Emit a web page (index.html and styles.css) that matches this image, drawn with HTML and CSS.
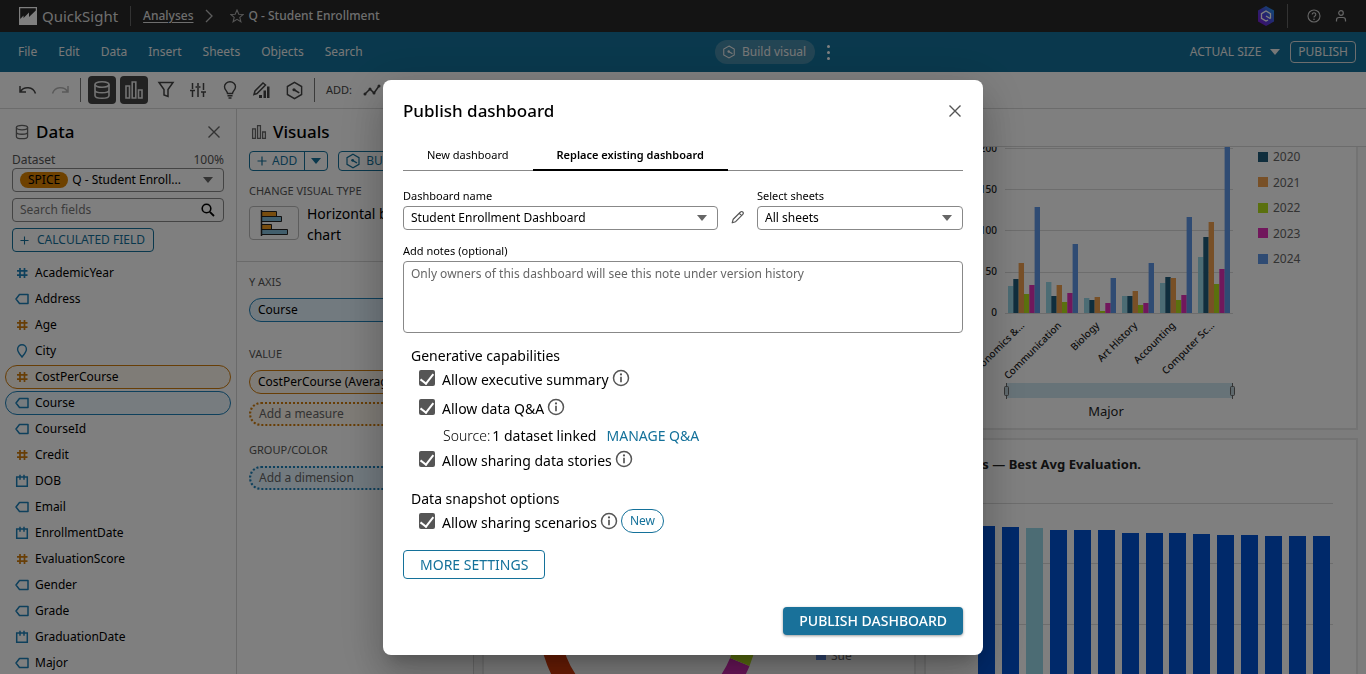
FILE: index.html
```html
<!DOCTYPE html>
<html lang="en">
<head>
<meta charset="utf-8">
<title>QuickSight - Q - Student Enrollment</title>
<link rel="stylesheet" href="styles.css">
</head>
<body>
<svg class="sprite" aria-hidden="true">
  <symbol id="i-num" viewBox="0 0 14 14"><path d="M5 2v10M9.500 2v10M2 4.800h10.500M2 9.200h10.500" fill="none" stroke="currentColor" stroke-width="1.700"/></symbol>
  <symbol id="i-tag" viewBox="0 0 14 14"><path d="M4.500 2.500H13v9H4.500L1 7z" fill="none" stroke="currentColor" stroke-width="1.500" stroke-linejoin="round"/></symbol>
  <symbol id="i-pin" viewBox="0 0 14 14"><path d="M7 13C4.500 9.800 2.600 7.800 2.600 5.200a4.400 4.400 0 0 1 8.800 0C11.400 7.800 9.500 9.800 7 13z" fill="none" stroke="currentColor" stroke-width="1.400"/></symbol>
  <symbol id="i-date" viewBox="0 0 14 14"><path d="M1.700 3h10.600v9.300H1.700zM5 0.800v5M9 0.800v5" fill="none" stroke="currentColor" stroke-width="1.500"/></symbol>
  <symbol id="i-db" viewBox="0 0 20 20"><g fill="none" stroke="currentColor" stroke-width="1.600"><ellipse cx="10" cy="4.500" rx="7" ry="2.800"/><path d="M3 4.500v11c0 1.600 3 2.800 7 2.800s7-1.200 7-2.800v-11M3 10c0 1.600 3 2.800 7 2.800s7-1.200 7-2.800"/></g></symbol>
  <symbol id="i-bars" viewBox="0 0 20 20"><path d="M2 6h3.500v12H2zM8.200 2h3.600v16H8.200zM14.500 10H18v8h-3.500z" fill="none" stroke="currentColor" stroke-width="1.600"/></symbol>
  <symbol id="i-hex" viewBox="0 0 20 20"><path d="M10 1.500l7.500 4.300v8.400L10 18.500l-7.500-4.300V5.800z" fill="none" stroke="currentColor" stroke-width="1.500"/><path d="M9.500 9.200l5.500 3.300" stroke="currentColor" stroke-width="1.800"/><circle cx="9.500" cy="9.200" r="1.700" fill="currentColor"/></symbol>
  <symbol id="i-x" viewBox="0 0 14 14"><path d="M1.500 1.500l11 11M12.500 1.500l-11 11" fill="none" stroke="currentColor" stroke-width="1.400"/></symbol>
  <symbol id="i-down" viewBox="0 0 10 6"><path d="M0 0h10L5 6z" fill="currentColor"/></symbol>
  <symbol id="i-info" viewBox="0 0 18 18"><circle cx="9" cy="9" r="7.500" fill="none" stroke="currentColor" stroke-width="1.500"/><circle cx="9" cy="5.400" r="1.100" fill="currentColor"/><path d="M9 7.800v5.400" stroke="currentColor" stroke-width="1.700"/></symbol>
  <symbol id="i-plus" viewBox="0 0 10 10"><path d="M5 0.500v9M0.500 5h9" stroke="currentColor" stroke-width="1.200"/></symbol>
</svg>

<header class="topbar">
  <a class="brand" href="#"><svg width="18" height="18" viewBox="0 0 18 18"><path d="M0 0h18v18H0z" fill="#fff"/><path d="M1.200 1.200h15.600v2.300L10 10V5.500L4.500 11V8.500L1.200 12z" fill="#282828"/></svg>QuickSight</a>
  <span class="rule"></span>
  <a class="crumb" href="#">Analyses</a>
  <svg width="8" height="14" viewBox="0 0 8 14"><path d="M1 1l6 6-6 6" fill="none" stroke="#bbb" stroke-width="1.300"/></svg>
  <span class="doc"><svg width="14" height="14" viewBox="0 0 14 14"><path d="M7 1l1.800 4.200 4.400.3-3.400 2.900 1.100 4.400L7 10.400l-3.900 2.400 1.100-4.400L.8 5.500l4.400-.3z" fill="none" stroke="#aaa" stroke-width="1.100"/></svg>Q - Student Enrollment</span>
  <div class="top-right">
    <svg width="18" height="20" viewBox="0 0 18 20"><defs><linearGradient id="qg" x1="1" y1="0" x2="0" y2="1"><stop offset="0" stop-color="#1ba7ee"/><stop offset=".5" stop-color="#4c46e0"/><stop offset="1" stop-color="#8a14d4"/></linearGradient></defs><path d="M9 0l8 4.500v11L9 20l-8-4.500v-11z" fill="url(#qg)"/><path d="M11 14L9 15l-4.500-2.600V7.600L9 5l4.500 2.600v4.800M9 10l4.500 2.800" fill="none" stroke="#fff" stroke-width="1.300"/></svg>
    <span class="rule"></span>
    <svg width="14" height="14" viewBox="0 0 14 14"><circle cx="7" cy="7" r="6" fill="none" stroke="#ccc" stroke-width="1.100"/><path d="M5.200 5.500a1.800 1.800 0 1 1 2.700 1.600c-.7.400-.9.700-.9 1.400" fill="none" stroke="#ccc" stroke-width="1.100"/><circle cx="7" cy="10.200" r=".8" fill="#ccc"/></svg>
    <svg width="12" height="14" viewBox="0 0 12 14"><circle cx="6" cy="4" r="2.300" fill="none" stroke="#ccc" stroke-width="1.200"/><path d="M1.500 12.500V11c0-1.800 1.200-2.500 2.500-2.500h4c1.300 0 2.500.7 2.500 2.500v1.500" fill="none" stroke="#ccc" stroke-width="1.200"/></svg>
  </div>
</header>

<nav class="menubar">
  <div class="menus"><a href="#">File</a><a href="#">Edit</a><a href="#">Data</a><a href="#">Insert</a><a href="#">Sheets</a><a href="#">Objects</a><a href="#">Search</a></div>
  <button class="build"><svg width="14" height="14"><use href="#i-hex"/></svg>Build visual</button>
  <button class="dots" aria-label="More"><i></i><i></i><i></i></button>
  <div class="menu-right">
    <button class="zoomsize">ACTUAL SIZE <svg width="10" height="6"><use href="#i-down"/></svg></button>
    <button class="publish">PUBLISH</button>
  </div>
</nav>

<div class="toolbar">
  <button aria-label="Undo"><svg width="20" height="16" viewBox="0 0 20 16"><path d="M2 4v6h6M2.500 9.500C6 4 15 4.500 17.500 11.500" fill="none" stroke="currentColor" stroke-width="1.500"/></svg></button>
  <button class="faded" aria-label="Redo"><svg width="20" height="16" viewBox="0 0 20 16"><path d="M18 4v6h-6M17.500 9.500C14 4 5 4.500 2.500 11.500" fill="none" stroke="currentColor" stroke-width="1.500"/></svg></button>
  <span class="rule"></span>
  <button class="on" aria-label="Data"><svg width="20" height="20"><use href="#i-db"/></svg></button>
  <button class="on" aria-label="Visuals"><svg width="20" height="20"><use href="#i-bars"/></svg></button>
  <button aria-label="Filter"><svg width="18" height="18" viewBox="0 0 18 18"><path d="M2 1.500h14L11 8.500v7l-4-1.500V8.500z" fill="none" stroke="currentColor" stroke-width="1.500"/></svg></button>
  <button aria-label="Parameters"><svg width="18" height="18" viewBox="0 0 18 18"><path d="M3.500 2v6M3.500 10v6M9 2v3M9 7v9M14.500 2v7M14.500 11.500V16M1 9.500h5M6.500 6h5M12 11h5" fill="none" stroke="currentColor" stroke-width="1.500"/></svg></button>
  <button aria-label="Insights"><svg width="14" height="18" viewBox="0 0 14 18"><path d="M4.500 12.500C4.500 10 1.500 9 1.500 5.700a5.500 5 0 0 1 11 0C12.500 9 9.500 10 9.500 12.500zM4.500 14.800h5M5.500 17h3" fill="none" stroke="currentColor" stroke-width="1.400"/></svg></button>
  <button aria-label="Edit chart"><svg width="20" height="18" viewBox="0 0 20 18"><path d="M2 13.500l1-3.500 8-8 2.500 2L5 12.500z" fill="none" stroke="currentColor" stroke-width="1.500"/><path d="M7 17v-3h3v3zM11.500 17V9.500h2.500V17zM15 17V5.500h2.500V17z" fill="currentColor"/></svg></button>
  <button aria-label="Q"><svg width="19" height="19"><use href="#i-hex"/></svg></button>
  <span class="rule"></span>
  <span class="addlabel">ADD:</span>
  <svg width="18" height="12" viewBox="0 0 18 12"><path d="M2 10l5-5 4 4 5-7" fill="none" stroke="currentColor" stroke-width="1.500"/><g fill="currentColor"><circle cx="2" cy="10" r="1.500"/><circle cx="7" cy="5" r="1.500"/><circle cx="11" cy="9" r="1.500"/><circle cx="16" cy="2" r="1.500"/></g></svg>
</div>

<div class="workspace">
  <aside class="data-pane">
    <div class="pane-head"><svg width="16" height="16"><use href="#i-db"/></svg><h2>Data</h2><button aria-label="Close data"><svg width="14" height="14"><use href="#i-x"/></svg></button></div>
    <div class="ds-label"><span>Dataset</span><span>100%</span></div>
    <button class="dataset"><span class="spice">SPICE</span><span class="dsname">Q - Student Enroll...</span><svg width="10" height="6"><use href="#i-down"/></svg></button>
    <div class="search"><input type="text" placeholder="Search fields" aria-label="Search fields"><svg width="14" height="14" viewBox="0 0 14 14"><circle cx="5.500" cy="5.500" r="4.300" fill="none" stroke="currentColor" stroke-width="1.600"/><path d="M8.800 8.800L13 13" stroke="currentColor" stroke-width="1.800"/></svg></div>
    <button class="calc"><svg width="9" height="9"><use href="#i-plus"/></svg>CALCULATED FIELD</button>
    <ul class="fields">
      <li><svg><use href="#i-num"/></svg>AcademicYear</li>
      <li><svg><use href="#i-tag"/></svg>Address</li>
      <li class="measure"><svg><use href="#i-num"/></svg>Age</li>
      <li><svg><use href="#i-pin"/></svg>City</li>
      <li class="measure used"><svg><use href="#i-num"/></svg>CostPerCourse</li>
      <li class="used"><svg><use href="#i-tag"/></svg>Course</li>
      <li><svg><use href="#i-tag"/></svg>CourseId</li>
      <li class="measure"><svg><use href="#i-num"/></svg>Credit</li>
      <li><svg><use href="#i-date"/></svg>DOB</li>
      <li><svg><use href="#i-tag"/></svg>Email</li>
      <li><svg><use href="#i-date"/></svg>EnrollmentDate</li>
      <li class="measure"><svg><use href="#i-num"/></svg>EvaluationScore</li>
      <li><svg><use href="#i-tag"/></svg>Gender</li>
      <li><svg><use href="#i-tag"/></svg>Grade</li>
      <li><svg><use href="#i-date"/></svg>GraduationDate</li>
      <li><svg><use href="#i-tag"/></svg>Major</li>
    </ul>
  </aside>

  <aside class="visuals-pane">
    <section class="vis-top">
      <div class="pane-head"><svg width="16" height="16"><use href="#i-bars"/></svg><h2>Visuals</h2></div>
      <div class="vis-actions">
        <div class="split"><button><svg width="10" height="10"><use href="#i-plus"/></svg>ADD</button><button aria-label="Add options"><svg width="10" height="6"><use href="#i-down"/></svg></button></div>
        <button class="build-btn"><svg width="16" height="16"><use href="#i-hex"/></svg>BUILD</button>
      </div>
      <h3>CHANGE VISUAL TYPE</h3>
      <div class="vis-type">
        <button aria-label="Visual type"><svg width="28" height="28" viewBox="0 0 28 28"><g stroke="#222" stroke-width="1"><path d="M1.500 2.500h15v5h-15zM1.500 15.500h10v5h-10z" fill="#f09a1e"/><path d="M1.500 7.500h20v5h-20zM1.500 20.500h26v5h-26z" fill="#83bdd8"/><path d="M1.500 1v26" stroke-width="1.500"/></g></svg></button>
        <span>Horizontal bar chart</span>
      </div>
    </section>
    <section class="wells">
      <h3>Y AXIS</h3>
      <div class="well">Course</div>
      <h3>VALUE</h3>
      <div class="well measure">CostPerCourse (Average)</div>
      <div class="well measure empty">Add a measure</div>
      <h3>GROUP/COLOR</h3>
      <div class="well empty">Add a dimension</div>
    </section>
  </aside>

  <main class="sheet">
    <div class="sheet-tabs"></div>
    <div class="board">
      <div class="card cut"></div>
      <div class="card cut">
        <svg viewBox="926 147 430 281" role="img" aria-label="Enrollment by major and year">
          <g stroke="#dadada"><path d="M1005 148.500h228M1005 189.500h228M1005 230.500h228M1005 272.500h228M1005 313.500h228"/></g>
          <g class="axis" text-anchor="end"><text x="997" y="152">200</text><text x="997" y="193">150</text><text x="997" y="234">100</text><text x="997" y="275">50</text><text x="997" y="316">0</text></g>
          <path fill="#98d8e8" d="M1008 286h5.400v27h-5.400zM1046 282h5.400v31h-5.400zM1084 298h5.400v15h-5.400zM1122 296h5.400v17h-5.400zM1160 283h5.400v30h-5.400zM1198 257h5.400v56h-5.400z"/>
          <path fill="#205c7a" d="M1013.300 279h5.400v34h-5.400zM1051.300 296h5.400v17h-5.400zM1089.300 300h5.400v13h-5.400zM1127.300 296h5.400v17h-5.400zM1165.300 277h5.400v36h-5.400zM1203.300 237h5.400v76h-5.400z"/>
          <path fill="#f0a04f" d="M1018.600 263h5.400v50h-5.400zM1056.600 285h5.400v28h-5.400zM1094.600 297h5.400v16h-5.400zM1132.600 291h5.400v22h-5.400zM1170.600 278h5.400v35h-5.400zM1208.600 222h5.400v91h-5.400z"/>
          <path fill="#b4e01c" d="M1024 294h5.400v19h-5.400zM1062 302h5.400v11h-5.400zM1100 311h5.400v2h-5.400zM1138 305h5.400v8h-5.400zM1176 300h5.400v13h-5.400zM1214 284h5.400v29h-5.400z"/>
          <path fill="#e22fb8" d="M1029.300 285h5.400v28h-5.400zM1067.300 293h5.400v20h-5.400zM1105.300 303h5.400v10h-5.400zM1143.300 303h5.400v10h-5.400zM1181.300 295h5.400v18h-5.400zM1219.300 269h5.400v44h-5.400z"/>
          <path fill="#5f96e6" d="M1034.600 207h5.400v106h-5.400zM1072.600 244h5.400v69h-5.400zM1110.600 278h5.400v35h-5.400zM1148.600 263h5.400v50h-5.400zM1186.600 217h5.400v96h-5.400zM1224.600 147h5.400v166h-5.400z"/>
          <g class="axis" text-anchor="end">
            <text transform="translate(1025 326) rotate(-45)">Economics &amp;...</text>
            <text transform="translate(1062 326) rotate(-45)">Communication</text>
            <text transform="translate(1100 326) rotate(-45)">Biology</text>
            <text transform="translate(1138 326) rotate(-45)">Art History</text>
            <text transform="translate(1176 326) rotate(-45)">Accounting</text>
            <text transform="translate(1215 326) rotate(-45)">Computer Sc...</text>
          </g>
          <path d="M1007 383h226v15h-226z" fill="#cfe6f0"/>
          <g fill="#bcd0d8" stroke="#666"><path d="M1006.500 383v16M1232.500 383v16"/><rect x="1004.500" y="386.500" width="4" height="9" rx="1"/><rect x="1230.500" y="386.500" width="4" height="9" rx="1"/></g>
          <text class="axis-title" x="1106" y="416" text-anchor="middle">Major</text>
          <g class="legend"><path d="M1258 152h10v10h-10z" fill="#205c7a"/><path d="M1258 177h10v10h-10z" fill="#f0a04f"/><path d="M1258 203h10v10h-10z" fill="#b4e01c"/><path d="M1258 228h10v10h-10z" fill="#e22fb8"/><path d="M1258 254h10v10h-10z" fill="#5f96e6"/>
          <text x="1273" y="161">2020</text><text x="1273" y="187">2021</text><text x="1273" y="212">2022</text><text x="1273" y="238">2023</text><text x="1273" y="263">2024</text></g>
        </svg>
      </div>
      <div class="card">
        <svg viewBox="484 440 430 234" role="img" aria-label="Enrollment by adviser">
          <g fill="none" stroke-width="21"><path d="M648.500 723.500A98.500 98.500 0 0 1 550 625" stroke="#d83a08"/><path d="M739.800 662A98.500 98.500 0 0 1 648.500 723.500" stroke="#d42ab4"/><path d="M747 625A98.500 98.500 0 0 1 739.800 662" stroke="#b4dc1e"/></g>
          <path d="M816 650h10v10h-10z" fill="#5f8ae0"/>
          <g class="legend"><text x="831" y="660">Sue</text></g>
          <g class="axis"><text x="493" y="682">Eva</text></g>
        </svg>
      </div>
      <div class="card">
        <h3 class="card-title">Majors — Best Avg Evaluation.</h3>
        <svg viewBox="926 490 430 184" role="img" aria-label="Best average evaluation">
          <g stroke="#dadada"><path d="M960 503.500h373M960 563.500h373M960 624.500h373"/></g>
          <path fill="#0052d4" d="M978 526h17v150h-17zM1002 527h17v150h-17zM1050 530h17v150h-17zM1074 530h17v150h-17zM1098 530h17v150h-17zM1122 533h17v150h-17zM1146 533h17v150h-17zM1169 533h17v150h-17zM1193 534h17v150h-17zM1217 535h17v150h-17zM1241 535h17v150h-17zM1265 536h17v150h-17zM1289 536h17v150h-17zM1313 536h17v150h-17z"/>
          <path fill="#98d8e8" d="M1026 528h17v150h-17z"/>
        </svg>
      </div>
    </div>
  </main>
</div>

<div class="overlay">
  <div class="dialog" role="dialog" aria-modal="true" aria-labelledby="dlg-title">
    <div class="dlg-head"><h1 id="dlg-title">Publish dashboard</h1><button aria-label="Close"><svg width="14" height="14"><use href="#i-x"/></svg></button></div>
    <div class="tabs" role="tablist"><button role="tab">New dashboard</button><button role="tab" aria-selected="true">Replace existing dashboard</button></div>
    <div class="form-row">
      <div class="field name"><label for="dname">Dashboard name</label><div class="select"><select id="dname"><option>Student Enrollment Dashboard</option></select><svg width="10" height="6"><use href="#i-down"/></svg></div></div>
      <button class="pencil" aria-label="Rename"><svg width="14" height="14" viewBox="0 0 14 14"><path d="M1.200 12.800l1-3.600L9.500 2c.6-.7 1.700-.7 2.300 0 .7.700.7 1.700 0 2.300l-7.200 7.400zM8.300 3.300l2.300 2.300" fill="none" stroke="currentColor" stroke-width="1.200" stroke-linejoin="round"/></svg></button>
      <div class="field sheets"><label for="sheets">Select sheets</label><div class="select"><select id="sheets"><option>All sheets</option></select><svg width="10" height="6"><use href="#i-down"/></svg></div></div>
    </div>
    <div class="field notes"><label for="notes">Add notes (optional)</label><textarea id="notes" placeholder="Only owners of this dashboard will see this note under version history"></textarea></div>
    <div class="options">
      <h2>Generative capabilities</h2>
      <div class="opt"><input type="checkbox" id="c1" checked><label for="c1">Allow executive summary</label><svg class="info"><use href="#i-info"/></svg></div>
      <div class="opt spaced"><input type="checkbox" id="c2" checked><label for="c2">Allow data Q&amp;A</label><svg class="info"><use href="#i-info"/></svg></div>
      <div class="source"><span class="light">Source:</span><span>1 dataset linked</span><a href="#">MANAGE Q&amp;A</a></div>
      <div class="opt"><input type="checkbox" id="c3" checked><label for="c3">Allow sharing data stories</label><svg class="info"><use href="#i-info"/></svg></div>
      <h2 class="second">Data snapshot options</h2>
      <div class="opt"><input type="checkbox" id="c4" checked><label for="c4">Allow sharing scenarios</label><svg class="info"><use href="#i-info"/></svg><span class="new">New</span></div>
    </div>
    <button class="more">MORE SETTINGS</button>
    <div class="dlg-foot"><button class="primary">PUBLISH DASHBOARD</button></div>
  </div>
</div>
</body>
</html>
```
FILE: styles.css
```css
* { box-sizing: border-box; }
body { margin: 0; height: 100vh; overflow: hidden; display: flex; flex-direction: column; font: 400 12px/16px "Noto Sans", "Open Sans", sans-serif; color: #000; background: #fff; }
button, input, select, textarea { font: inherit; color: inherit; margin: 0; }
button { padding: 0; border: 0; background: none; display: flex; align-items: center; justify-content: center; }
a { color: inherit; text-decoration: none; }
h1, h2, h3, ul { margin: 0; padding: 0; font-weight: 400; }
svg { display: block; flex: none; }
.sprite { position: absolute; width: 0; height: 0; }

.topbar { flex: none; height: 32px; background: #282828; color: #ddd; display: flex; align-items: center; padding: 0 19px; font-weight: 500; }
.brand { display: flex; align-items: center; gap: 5px; font-size: 15px; font-weight: 400; }
.topbar .rule { width: 1px; height: 20px; background: #666; margin: 0 12px; }
.crumb { text-decoration: underline; text-underline-offset: 2px; margin-right: 12px; }
.doc { display: flex; align-items: center; gap: 4px; margin-left: 17px; }
.top-right { margin-left: auto; display: flex; align-items: center; gap: 8px; }
.top-right .rule { height: 24px; margin: 0 11px 0 4px; }
.top-right svg:last-child { margin: 0 0 0 6px; }

.menubar { flex: none; height: 40px; background: #14719a; color: #eee; display: flex; align-items: center; padding: 0 10px 0 18px; }
.menus { display: flex; gap: 21px; flex: 57 1 0; }
.build { height: 24px; padding: 0 9px 0 7px; gap: 6px; border-radius: 12px; background: #478ba8; }
.dots { flex-direction: column; gap: 3px; margin-left: 12px; }
.dots i { width: 3px; height: 3px; border-radius: 50%; background: #fff; }
.menu-right { flex: 43 1 0; display: flex; justify-content: flex-end; align-items: center; gap: 10px; }
.zoomsize { gap: 9px; }
.publish { height: 22px; padding: 0 7px; border: 1px solid #ddd; border-radius: 4px; }

.toolbar { flex: none; height: 37px; border-bottom: 1px solid #d8d8d8; display: flex; align-items: center; gap: 4px; padding-left: 14px; color: #444; }
.toolbar button { width: 28px; height: 28px; border-radius: 4px; }
.toolbar .faded { color: #b5b5b5; }
.toolbar .on { background: #444; color: #e6e6e6; }
.toolbar .rule { width: 1px; height: 24px; background: #777; margin: 0 3px 0 2px; }
.addlabel { font-size: 11px; margin: 0 7px 0 4px; }

.workspace { flex: 1; min-height: 0; display: flex; }
.pane-head { display: flex; align-items: center; gap: 6px; color: #666; height: 24px; }
.pane-head h2 { font-size: 17px; line-height: 24px; color: #000; font-weight: 500; }
.pane-head button { margin-left: auto; }
.data-pane { flex: none; width: 237px; border-right: 1px solid #d5d5d5; padding: 11px 12px 0; }
.data-pane .pane-head { padding: 0 3px 0 2px; }
.ds-label { display: flex; justify-content: space-between; color: #555; margin: 8px 0 0; }
.dataset, .search { width: 212px; height: 24px; border: 1px solid #888; border-radius: 4px; display: flex; align-items: center; padding: 0 10px 0 7px; }
.dataset { justify-content: flex-start; }
.dataset svg { margin-left: auto; color: #666; }
.spice { background: #dc8200; border-radius: 8px; padding: 0 8px; margin-right: 4px; }
.search { margin-top: 6px; padding-right: 8px; }
.search input { border: 0; outline: 0; background: none; width: 100%; min-width: 0; padding: 0; }
.search input::placeholder { color: #777; opacity: 1; }
.calc { margin-top: 6px; height: 24px; border: 1px solid #14719a; border-radius: 4px; color: #14719a; padding: 0 8px 0 7px; gap: 8px; }
.fields { list-style: none; margin: 9px -7px 0; }
.fields li { height: 24px; margin-bottom: 2px; padding: 0 9px; display: flex; align-items: center; gap: 6px; border: 1px solid transparent; border-radius: 12px; }
.fields svg { width: 14px; height: 14px; color: #1d80b8; }
.fields .measure svg { color: #d07c0c; }
.fields .used { background: #eef8ff; border-color: #1d80b8; }
.fields .measure.used { background: #fff8ee; border-color: #d07c0c; }

.visuals-pane { flex: none; width: 237px; border-right: 1px solid #d5d5d5; overflow: hidden; }
.vis-top { padding: 11px 12px 16px; border-bottom: 1px solid #d5d5d5; }
.visuals-pane .pane-head { padding-left: 2px; }
.vis-actions { display: flex; gap: 10px; margin-top: 7px; color: #14719a; }
.vis-actions button { height: 20px; gap: 5px; }
.split, .build-btn { border: 1px solid #14719a; border-radius: 4px; }
.split { display: flex; height: 20px; }
.split button { height: 18px; padding: 0 7px; }
.split button + button { border-left: 1px solid #14719a; padding: 0 6px; }
.build-btn { padding: 0 12px 0 6px; gap: 9px; }
.visuals-pane h3 { font-size: 11px; color: #555; line-height: 16px; }
.vis-actions + h3 { margin-top: 12px; }
.vis-type { display: flex; gap: 8px; margin-top: 4px; font-size: 14px; line-height: 21px; }
.vis-type button { width: 50px; height: 34px; border: 1px solid #bbb; border-radius: 4px; margin-top: 3px; flex: none; }
.vis-type span { max-width: 110px; }
.wells { padding: 12px; display: flex; flex-direction: column; }
.wells h3 { margin-bottom: 8px; }
.wells .well + h3 { margin-top: 24px; }
.well { height: 24px; line-height: 22px; border: 1px solid #1d80b8; border-radius: 12px; background: #e4f4ff; padding-left: 8px; white-space: nowrap; overflow: hidden; }
.well.measure { border-color: #d07c0c; background: #fff8ee; }
.well.empty { border-style: dotted; border-width: 2px; line-height: 20px; color: #666; }
.well + .well { margin-top: 8px; }
.wells .well.empty + h3 { margin-top: 16px; }

.sheet { flex: 1; min-width: 0; display: flex; flex-direction: column; background: #f8f8f8; }
.sheet-tabs { flex: none; height: 38px; border-bottom: 1px solid #d8d8d8; background: #fff; }
.board { flex: 1; min-height: 0; overflow: hidden; display: grid; grid-template-columns: 1fr 1fr; align-content: start; gap: 8px; padding: 0 8px; }
.card { border: 2px solid #e6e6e6; background: #fff; }
.card.cut { border-top: 0; }
.card > svg { width: 100%; height: auto; }
.card-title { font-size: 13px; font-weight: 700; line-height: 20px; padding: 14px 50% 16px 0; text-align: right; white-space: nowrap; color: #222; }
.axis { font-size: 10px; font-weight: 500; fill: #222; }
.axis-title { font-size: 13px; fill: #222; }
.legend { font-size: 12px; fill: #666; }

.overlay { position: fixed; inset: 0; background: rgba(0, 0, 0, .5); display: flex; justify-content: center; align-items: flex-start; padding-top: 80px; }
.dialog { width: 600px; max-width: 100%; background: #fff; border-radius: 8px; padding: 19px 20px 20px; box-shadow: 0 11px 15px -7px rgba(0,0,0,.2), 0 24px 38px 3px rgba(0,0,0,.14), 0 9px 46px 8px rgba(0,0,0,.12); }
.dlg-head { display: flex; justify-content: space-between; align-items: center; padding-right: 1px; color: #555; }
.dlg-head h1 { font-size: 17px; line-height: 24px; color: #000; font-weight: 500; }
.tabs { display: flex; border-bottom: 1px solid #888; margin-top: 17px; font-size: 11px; }
.tabs button { height: 31px; padding: 0 24px; margin-bottom: -1px; border-bottom: 2px solid transparent; }
.tabs [aria-selected] { font-weight: 600; border-color: #000; }
.form-row { display: flex; align-items: flex-end; margin-top: 17px; }
.field { display: flex; flex-direction: column; font-size: 11px; }
.field.name { flex: 315; }
.field.sheets { flex: 206; }
.pencil { width: 39px; height: 26px; color: #555; }
.select { display: flex; align-items: center; position: relative; margin-top: 2px; font-size: 12px; }
.select select { appearance: none; width: 100%; height: 24px; border: 1px solid #888; border-radius: 4px; background: #fff; padding: 0 24px 0 7px; }
.select svg { position: absolute; right: 11px; color: #666; pointer-events: none; }
.notes { margin-top: 13px; }
.notes textarea { height: 72px; margin-top: 2px; border: 1px solid #888; border-radius: 4px; padding: 4px 7px; resize: none; font-size: 12px; }
.notes textarea::placeholder { color: #666; opacity: 1; }
.options { padding: 13px 8px 0; font-size: 14px; }
.options h2 { font-size: 14px; line-height: 20px; }
.options h2.second { margin-top: 18px; }
.opt { display: flex; align-items: center; height: 24px; padding-left: 8px; }
.opt.spaced { margin-top: 5px; }
.opt input { appearance: none; width: 16px; height: 16px; border-radius: 2px; background: #555; margin-right: 7px; display: flex; justify-content: center; }
.opt input::after { content: ""; width: 6px; height: 11px; margin-top: 1px; border: solid #fff; border-width: 0 2px 2px 0; transform: rotate(38deg); }
.opt label { padding-top: 3px; }
.info { width: 18px; height: 18px; margin-left: 3px; color: #555; }
.new { height: 24px; border: 1px solid #14719a; border-radius: 12px; color: #14719a; padding: 0 8px; line-height: 22px; font-size: 12px; margin-left: 3px; }
.source { display: flex; padding-left: 32px; gap: 2px; line-height: 20px; margin: 7px 0 1px; }
.source .light { font-weight: 300; }
.source a { color: #14719a; margin-left: 8px; }
.more { margin-top: 17px; height: 29px; border: 1px solid #14719a; border-radius: 4px; color: #14719a; font-size: 14px; padding: 0 16px; }
.dlg-foot { display: flex; justify-content: flex-end; margin-top: 28px; }
.primary { height: 28px; padding: 0 16px; border-radius: 4px; background: #19719a; color: #fff; font-size: 14px; font-weight: 500; box-shadow: 0 1px 3px rgba(0,0,0,.4); }
```
